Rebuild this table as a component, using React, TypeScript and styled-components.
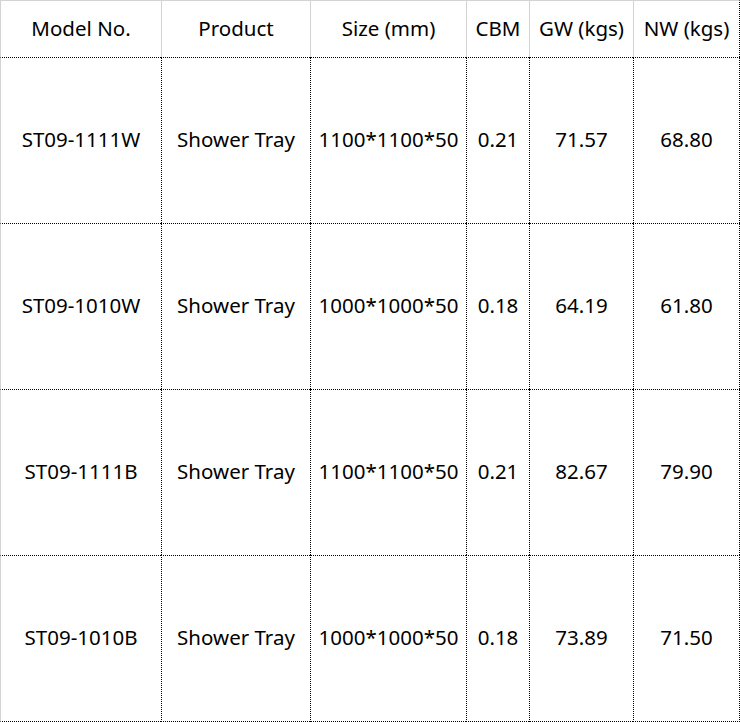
import styled, { createGlobalStyle } from "styled-components";

const GlobalStyle = createGlobalStyle`
  html, body {
    margin: 0;
    padding: 0;
    background: #ffffff;
  }
`;

const widths = [161, 149, 156, 63, 104, 106];

const headers = ["Model No.", "Product", "Size (mm)", "CBM", "GW (kgs)", "NW (kgs)"];

const rows = [
  ["ST09-1111W", "Shower Tray", "1100*1100*50", "0.21", "71.57", "68.80"],
  ["ST09-1010W", "Shower Tray", "1000*1000*50", "0.18", "64.19", "61.80"],
  ["ST09-1111B", "Shower Tray", "1100*1100*50", "0.21", "82.67", "79.90"],
  ["ST09-1010B", "Shower Tray", "1000*1000*50", "0.18", "73.89", "71.50"],
];

const Table = styled.table`
  border-collapse: separate;
  border-spacing: 0;
  table-layout: fixed;
  width: 740px;
  font-family: "Noto Sans", "Open Sans", sans-serif;
  font-size: 20.5px;
  color: #000;
`;

const HeadCell = styled.th<{ $last?: boolean }>`
  height: 57px;
  padding: 0 0 3px;
  box-sizing: border-box;
  font-weight: 400;
  text-align: center;
  vertical-align: middle;
  white-space: nowrap;
  border-top: 1px solid #d3d3d3;
  border-left: 1px solid #d3d3d3;
  border-right: ${(p) => (p.$last ? "1px dotted #000" : "none")};
`;

const Cell = styled.td<{ $first?: boolean; $last?: boolean; $bottom?: boolean }>`
  height: 162px;
  padding: 0 0 3px;
  text-align: center;
  vertical-align: middle;
  white-space: nowrap;
  border-top: 1px dotted #000;
  border-left: ${(p) => (p.$first ? "1px solid #d3d3d3" : "1px dotted #000")};
  border-right: ${(p) => (p.$last ? "1px dotted #000" : "none")};
  border-bottom: ${(p) => (p.$bottom ? "1px dotted #000" : "none")};
`;

export default function App() {
  return (
    <>
      <GlobalStyle />
      <Table>
        <colgroup>
          {widths.map((w, i) => (
            <col key={i} style={{ width: i === widths.length - 1 ? w + 1 : w }} />
          ))}
        </colgroup>
        <thead>
          <tr>
            {headers.map((h, i) => (
              <HeadCell key={h} $last={i === headers.length - 1}>
                {h}
              </HeadCell>
            ))}
          </tr>
        </thead>
        <tbody>
          {rows.map((r, ri) => (
            <tr key={r[0]}>
              {r.map((c, ci) => (
                <Cell
                  key={ci}
                  $first={ci === 0}
                  $last={ci === r.length - 1}
                  $bottom={ri === rows.length - 1}
                >
                  {c}
                </Cell>
              ))}
            </tr>
          ))}
        </tbody>
      </Table>
    </>
  );
}
